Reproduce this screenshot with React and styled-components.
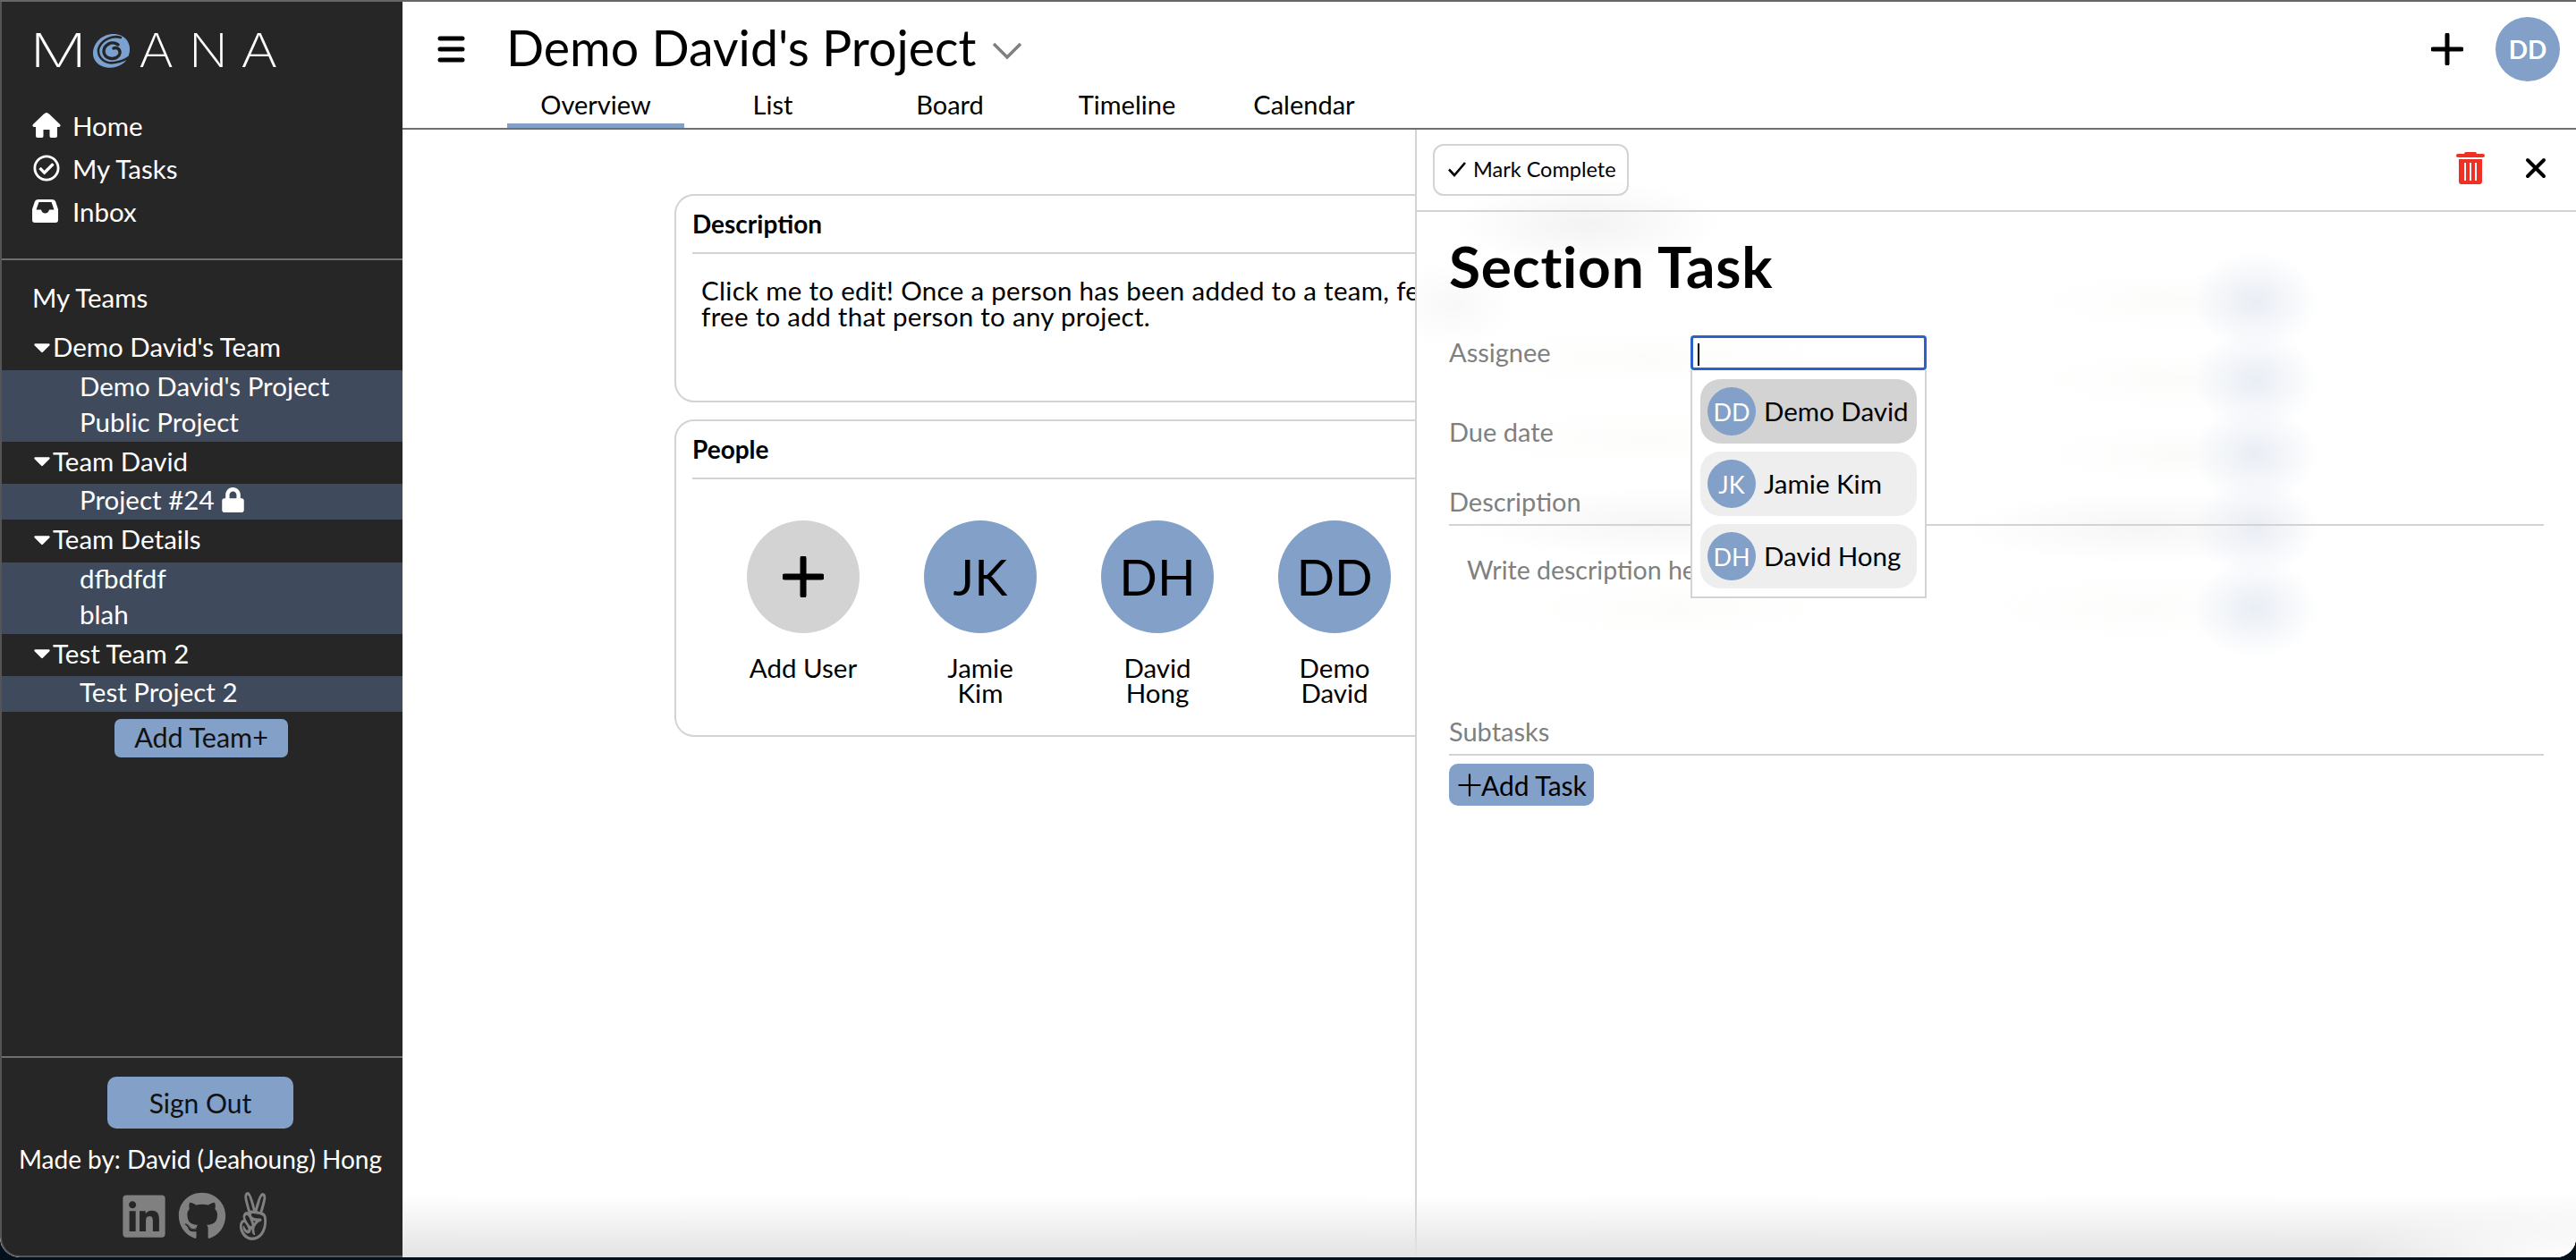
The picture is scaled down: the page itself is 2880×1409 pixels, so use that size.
import React from 'react';
import styled, { createGlobalStyle } from 'styled-components';
import { FaRegCheckCircle, FaCaretDown, FaLock, FaLinkedin, FaGithub, FaAngellist } from 'react-icons/fa';

const BLUE = '#82a0c8';
const LINE = '#d3d3d3';
const GREY = '#808080';

const GlobalStyle = createGlobalStyle`
  html, body {
    margin: 0;
    padding: 0;
    background: #05101a;
  }
  body {
    font-family: Lato, "Open Sans", sans-serif;
    font-size: 29px;
    color: #000;
  }
  * {
    box-sizing: border-box;
  }
`;

const Screen = styled.div`
  height: 1409px;
  overflow: hidden;
  background: #04101a;
`;

const AppWindow = styled.div`
  height: 1406px;
  display: grid;
  grid-template-columns: 450px 1fr;
  overflow: hidden;
  border-radius: 0 0 22px 22px;
  border-top: 2px solid #666;
  background: #fff;
`;

const Sidebar = styled.aside`
  display: flex;
  flex-direction: column;
  background: #262626;
  color: #fff;
  border-left: 2px solid #555;
  border-bottom: 2px solid #555;
  border-radius: 0 0 0 22px;
  font-size: 29.5px;
`;

const SidebarTop = styled.div`
  padding: 36px 0 29px 34px;
  border-bottom: 2px solid #6f6f6f;
`;

const Logo = styled.div`
  height: 38px;
  margin-bottom: 40px;
  display: flex;
  align-items: center;
  font-family: Inter, Lato, sans-serif;
  font-weight: 200;
  font-size: 52px;
  line-height: 38px;
`;

const LogoLetter = styled.span`
  display: block;
  width: ${(p) => p.$width}px;
  margin-left: ${(p) => p.$gap}px;
  transform: scaleX(${(p) => p.$stretch});
  transform-origin: left center;
`;

const LogoSwirl = styled.svg`
  width: 44px;
  height: 40px;
  flex: none;
  margin-left: 22px;
`;

const NavRow = styled.div`
  height: 48px;
  display: flex;
  align-items: center;
  svg {
    width: 32px;
    height: 30px;
    margin-right: 13px;
  }
`;

const TeamsTitle = styled.div`
  height: 40px;
  margin: 22px 0 13px 34px;
  line-height: 40px;
`;

const TeamRow = styled.div`
  height: 47.5px;
  padding: 0 0 4px 33px;
  display: flex;
  align-items: center;
  svg {
    width: 24px;
    height: 30px;
  }
`;

const ProjectList = styled.div`
  background: #3f4b5c;
`;

const ProjectRow = styled.div`
  height: 40px;
  padding: 0 0 5px 87px;
  display: flex;
  align-items: center;
  gap: 8px;
  svg {
    width: 25px;
    height: 28px;
  }
`;

const AddTeamButton = styled.button`
  display: block;
  width: 194px;
  height: 43px;
  margin: 8px 0 0 126px;
  padding: 0 0 4px;
  border: 0;
  border-radius: 7px;
  background: ${BLUE};
  color: #111;
  font: inherit;
  font-size: 30.5px;
`;

const SidebarFooter = styled.div`
  margin-top: auto;
  height: 223px;
  border-top: 2px solid #6f6f6f;
  display: flex;
  flex-direction: column;
  align-items: center;
  padding: 21px 4px 0 0;
`;

const SignOutButton = styled.button`
  width: 208px;
  height: 58px;
  border: 0;
  border-radius: 10px;
  background: ${BLUE};
  color: #111;
  font: inherit;
  font-size: 30px;
`;

const MadeBy = styled.div`
  margin-top: 16px;
  line-height: 36px;
  font-size: 28px;
  white-space: nowrap;
`;

const SocialRow = styled.div`
  margin: 19px 13px 0 0;
  display: flex;
  align-items: center;
  gap: 11px;
  color: ${GREY};
`;

const Main = styled.main`
  position: relative;
  display: flex;
  flex-direction: column;
  min-width: 0;
  &::after {
    content: '';
    position: absolute;
    left: 0;
    right: 0;
    bottom: 0;
    height: 70px;
    background:
      radial-gradient(ellipse 260px 66px at 100% 100%, #fff, rgba(255, 255, 255, 0)),
      linear-gradient(to bottom, rgba(227, 227, 227, 0), rgba(227, 227, 227, 1));
    pointer-events: none;
  }
`;

const Header = styled.header`
  height: 143px;
  flex: none;
  border-bottom: 2px solid #6f6f6f;
`;

const HeaderTop = styled.div`
  height: 94px;
  padding: 0 18px 0 39px;
  display: flex;
  align-items: center;
`;

const MenuIcon = styled.svg`
  width: 31px;
  height: 32px;
  flex: none;
  margin-right: 46px;
  margin-top: 12px;
`;

const ProjectTitle = styled.h1`
  margin: 7px 0 0;
  font-weight: 400;
  font-size: 55.5px;
  line-height: 70px;
`;

const TitleChevron = styled.svg`
  width: 34px;
  height: 20px;
  margin: 16px 0 0 18px;
`;

const HeaderActions = styled.div`
  margin-left: auto;
  display: flex;
  align-items: center;
  gap: 36px;
  margin-top: 12px;
`;

const BigPlus = styled.svg`
  width: ${(p) => p.$size}px;
  height: ${(p) => p.$size}px;
  display: block;
  flex: none;
`;

const UserBadge = styled.div`
  width: 72px;
  height: 72px;
  border-radius: 50%;
  background: ${BLUE};
  color: #fff;
  font-weight: 700;
  font-size: 28px;
  display: flex;
  align-items: center;
  justify-content: center;
`;

const Tabs = styled.nav`
  height: 47px;
  padding-left: 117px;
  display: flex;
`;

const Tab = styled.div`
  width: 198px;
  height: 47px;
  text-align: center;
  line-height: 42px;
  border-bottom: 5px solid ${(p) => (p.$active ? BLUE : 'transparent')};
`;

const Content = styled.div`
  position: relative;
  flex: 1;
  overflow: hidden;
  padding: 72px 0 0 304px;
`;

const Card = styled.section`
  width: 1000px;
  height: ${(p) => p.$height}px;
  margin-bottom: 19px;
  padding: 0 18px;
  border: 2px solid ${LINE};
  border-radius: 22px;
`;

const CardTitle = styled.h2`
  height: 65px;
  margin: 0;
  border-bottom: 2px solid ${LINE};
  font-weight: 700;
  font-size: 28px;
  line-height: 62px;
`;

const CardText = styled.p`
  width: 860px;
  margin: 26px 0 0 10px;
  font-size: 29.5px;
  letter-spacing: 0.3px;
  line-height: 29px;
`;

const PeopleRow = styled.div`
  padding: 46px 0 0 25px;
  display: flex;
`;

const Person = styled.div`
  width: 198px;
  display: flex;
  flex-direction: column;
  align-items: center;
  text-align: center;
  font-size: 29.5px;
  line-height: 28px;
`;

const PersonCircle = styled.div`
  width: 126px;
  height: 126px;
  margin-bottom: 25px;
  border-radius: 50%;
  background: ${(p) => (p.$add ? LINE : BLUE)};
  display: flex;
  align-items: center;
  justify-content: center;
  font-size: 56px;
`;

const blobs = [
  [937, 192, 70, 55, '#e9edf5'],
  [937, 280, 70, 55, '#e9edf5'],
  [937, 363, 70, 55, '#e9edf5'],
  [937, 445, 70, 55, '#eaedf5'],
  [937, 535, 70, 55, '#e9edf5'],
  [850, 192, 160, 34, '#fbfcfa'],
  [850, 280, 160, 34, '#fbfcfa'],
  [850, 363, 160, 34, '#fbfcfa'],
  [810, 445, 200, 40, '#f6f6f6'],
  [810, 535, 200, 40, '#fcfdfb'],
  [190, 105, 150, 50, '#f3f3f3'],
  [40, 195, 70, 50, '#f8f8f8'],
  [260, 255, 240, 34, '#fcfdfb'],
  [260, 345, 240, 34, '#fcfdfb'],
  [270, 440, 220, 40, '#f6f6f6'],
  [290, 535, 200, 34, '#fcfdfb'],
];

const blobBackground = blobs
  .map(([x, y, rx, ry, color]) => `radial-gradient(ellipse ${rx}px ${ry}px at ${x}px ${y}px, ${color}, rgba(255, 255, 255, 0))`)
  .join(', ');

const TaskPanel = styled.section`
  position: absolute;
  top: 0;
  right: 0;
  bottom: 0;
  left: 1132px;
  border-left: 2px solid ${LINE};
  background-color: #fff;
  background-image: ${blobBackground};
  font-size: 29px;
`;

const PanelBar = styled.div`
  height: 92px;
  padding: 16px 33px 0 18px;
  border-bottom: 2px solid ${LINE};
  display: flex;
  align-items: flex-start;
`;

const MarkCompleteButton = styled.button`
  width: 219px;
  height: 58px;
  padding: 0 0 2px 14px;
  border: 2px solid ${LINE};
  border-radius: 12px;
  background: transparent;
  font: inherit;
  font-size: 23.5px;
  display: flex;
  align-items: center;
  gap: 7px;
`;

const CheckIcon = styled.svg`
  width: 22px;
  height: 18px;
`;

const PanelActions = styled.div`
  margin-left: auto;
  display: flex;
  align-items: center;
  gap: 45px;
  padding-top: 9px;
`;

const TrashIcon = styled.svg`
  width: 32px;
  height: 36px;
`;

const CloseIcon = styled.svg`
  width: 24px;
  height: 24px;
`;

const PanelBody = styled.div`
  padding: 23px 36px 0;
`;

const TaskTitle = styled.h1`
  margin: 0 0 39px;
  font-weight: 700;
  font-size: 64px;
  letter-spacing: 0.8px;
  line-height: 76px;
`;

const FieldRow = styled.div`
  height: 39px;
  margin-bottom: ${(p) => p.$below}px;
  display: flex;
  align-items: center;
  color: ${GREY};
`;

const FieldLabel = styled.div`
  width: 270px;
  padding-bottom: 2px;
`;

const AssigneeBox = styled.div`
  position: relative;
  width: 264px;
  height: 39px;
`;

const AssigneeInput = styled.div`
  height: 39px;
  padding: 6px 0 0 5px;
  border: 3px solid #2c62c8;
  border-radius: 4px;
`;

const Caret = styled.div`
  width: 2px;
  height: 25px;
  background: #000;
`;

const AssigneeMenu = styled.div`
  position: absolute;
  top: 39px;
  left: 0;
  width: 264px;
  padding: 10px 9px 9px;
  border: 2px solid ${LINE};
  border-top: 0;
  background: #fff;
  display: flex;
  flex-direction: column;
  gap: 9px;
`;

const AssigneeOption = styled.div`
  height: 72px;
  padding-left: 8px;
  border-radius: 22px;
  background: ${(p) => (p.$active ? LINE : '#eeeeee')};
  color: #000;
  font-size: 29.5px;
  display: flex;
  align-items: center;
  gap: 9px;
  white-space: nowrap;
`;

const OptionName = styled.span`
  padding-bottom: 2px;
`;

const OptionCircle = styled.div`
  width: 54px;
  height: 54px;
  flex: none;
  border-radius: 50%;
  background: ${BLUE};
  color: #fff;
  display: flex;
  align-items: center;
  justify-content: center;
  font-size: 27px;
`;

const SectionLabel = styled.div`
  margin-top: ${(p) => p.$top}px;
  height: 48px;
  padding-bottom: 6px;
  border-bottom: 2px solid ${LINE};
  line-height: 41px;
  color: ${GREY};
`;

const DescriptionPlaceholder = styled.div`
  margin: 34px 0 0 20px;
  font-size: 28.5px;
  line-height: 30px;
  color: ${GREY};
`;

const AddTaskButton = styled.button`
  display: flex;
  align-items: center;
  width: 162px;
  height: 47px;
  margin-top: 9px;
  padding: 0 0 0 10px;
  border: 0;
  border-radius: 10px;
  background: ${BLUE};
  font: inherit;
  font-size: 30px;
`;

const teams = [
  { name: "Demo David's Team", projects: [{ name: "Demo David's Project" }, { name: 'Public Project' }] },
  { name: 'Team David', projects: [{ name: 'Project #24', locked: true }] },
  { name: 'Team Details', projects: [{ name: 'dfbdfdf' }, { name: 'blah' }] },
  { name: 'Test Team 2', projects: [{ name: 'Test Project 2' }] },
];

const tabs = ['Overview', 'List', 'Board', 'Timeline', 'Calendar'];

const people = [
  { initials: 'JK', name: 'Jamie Kim' },
  { initials: 'DH', name: 'David Hong' },
  { initials: 'DD', name: 'Demo David' },
];

const assignees = [
  { initials: 'DD', name: 'Demo David', active: true },
  { initials: 'JK', name: 'Jamie Kim' },
  { initials: 'DH', name: 'David Hong' },
];

const Plus = ({ size, weight }) => (
  <BigPlus $size={size} viewBox="0 0 36 36">
    <path d="M18 2v32M2 18h32" stroke="#000" strokeWidth={weight} strokeLinecap="round" fill="none" />
  </BigPlus>
);

const App = () => (
  <Screen>
    <GlobalStyle />
    <AppWindow>
      <Sidebar>
        <SidebarTop>
          <Logo>
            <LogoLetter $width={48} $gap={-3} $stretch={1.38}>M</LogoLetter>
            <LogoSwirl viewBox="0 0 44 40">
              <path d="M24 1C36 1 43 10 42 20C41 28 37 33 33 35C27 39 18 40 11 37C4 34 1 28 1 23C1 11 11 1 24 1Z" fill="#7ba1d0" />
              <path d="M32 5C22 2 10 8 7 18C6 27 14 35 25 33C31 32 36 31 41 27" stroke="#262626" strokeWidth="2.6" strokeLinecap="round" fill="none" />
              <path d="M29 13C22 8 13 13 13 21C14 29 25 31 30 25C33 20 29 15 24 17" stroke="#262626" strokeWidth="3.4" strokeLinecap="round" fill="none" />
            </LogoSwirl>
            <LogoLetter $width={41} $gap={8} $stretch={1.15}>A</LogoLetter>
            <LogoLetter $width={38} $gap={15} $stretch={1.1}>N</LogoLetter>
            <LogoLetter $width={41} $gap={20} $stretch={1.22}>A</LogoLetter>
          </Logo>
          <NavRow>
            <svg viewBox="0 0 32 30">
              <path fillRule="evenodd" d="M16 1Q17.5 1 19 2.5L31 14Q32.5 16.5 30 17H28V27Q28 29 26 29H21Q19.5 29 19.5 27V20H12.5V27Q12.5 29 11 29H6Q4 29 4 27V17H2Q-.5 16.5 1 14L13 2.5Q14.5 1 16 1Z" fill="#fff" />
            </svg>
            Home
          </NavRow>
          <NavRow><FaRegCheckCircle />My Tasks</NavRow>
          <NavRow>
            <svg viewBox="0 0 32 30">
              <path fillRule="evenodd" d="M7 2H22Q25 2 26 4L29 13V25Q29 28 26 28H3Q0 28 0 25V13L3 4Q4 2 7 2ZM7.5 5 4.5 13.5H10Q11 17.5 14.5 17.5T19 13.5H24.5L21.5 5Z" fill="#fff" />
            </svg>
            Inbox
          </NavRow>
        </SidebarTop>
        <TeamsTitle>My Teams</TeamsTitle>
        {teams.map((team) => (
          <div key={team.name}>
            <TeamRow><FaCaretDown />{team.name}</TeamRow>
            <ProjectList>
              {team.projects.map((project) => (
                <ProjectRow key={project.name}>
                  {project.name}
                  {project.locked && <FaLock />}
                </ProjectRow>
              ))}
            </ProjectList>
          </div>
        ))}
        <AddTeamButton>Add Team+</AddTeamButton>
        <SidebarFooter>
          <SignOutButton>Sign Out</SignOutButton>
          <MadeBy>Made by: David (Jeahoung) Hong</MadeBy>
          <SocialRow>
            <FaLinkedin size={54} />
            <FaGithub size={54} />
            <FaAngellist size={54} style={{ width: 38 }} preserveAspectRatio="none" />
          </SocialRow>
        </SidebarFooter>
      </Sidebar>
      <Main>
        <Header>
          <HeaderTop>
            <MenuIcon viewBox="0 0 31 32">
              <path d="M3 4h25M3 16h25M3 28h25" stroke="#000" strokeWidth="5" strokeLinecap="round" />
            </MenuIcon>
            <ProjectTitle>Demo David's Project</ProjectTitle>
            <TitleChevron viewBox="0 0 34 20">
              <path d="M2 2l15 15L32 2" stroke={GREY} strokeWidth="3.5" fill="none" />
            </TitleChevron>
            <HeaderActions>
              <Plus size={36} weight={5} />
              <UserBadge>DD</UserBadge>
            </HeaderActions>
          </HeaderTop>
          <Tabs>
            {tabs.map((tab) => (
              <Tab key={tab} $active={tab === 'Overview'}>{tab}</Tab>
            ))}
          </Tabs>
        </Header>
        <Content>
          <Card $height={233}>
            <CardTitle>Description</CardTitle>
            <CardText>Click me to edit! Once a person has been added to a team, feel free to add that person to any project.</CardText>
          </Card>
          <Card $height={355}>
            <CardTitle>People</CardTitle>
            <PeopleRow>
              <Person>
                <PersonCircle $add><Plus size={46} weight={5.5} /></PersonCircle>
                Add User
              </Person>
              {people.map((person) => (
                <Person key={person.initials}>
                  <PersonCircle>{person.initials}</PersonCircle>
                  {person.name.split(' ').map((part) => <div key={part}>{part}</div>)}
                </Person>
              ))}
            </PeopleRow>
          </Card>
          <TaskPanel>
            <PanelBar>
              <MarkCompleteButton>
                <CheckIcon viewBox="0 0 22 18">
                  <path d="M2 9.5 8 16 20 2" stroke="#000" strokeWidth="2.6" fill="none" />
                </CheckIcon>
                Mark Complete
              </MarkCompleteButton>
              <PanelActions>
                <TrashIcon viewBox="0 0 32 36">
                  <path fillRule="evenodd" d="M11 0H21Q23 0 23 2H30Q32 2 32 4T30 6H2Q0 6 0 4T2 2H9Q9 0 11 0ZM3 8H29V33Q29 36 26 36H6Q3 36 3 33ZM9 12V32H11V12ZM15 12V32H17V12ZM21 12V32H23V12Z" fill="#ee3124" />
                </TrashIcon>
                <CloseIcon viewBox="0 0 24 24">
                  <path d="M3 3l18 18M21 3L3 21" stroke="#000" strokeWidth="4" strokeLinecap="round" />
                </CloseIcon>
              </PanelActions>
            </PanelBar>
            <PanelBody>
              <TaskTitle>Section Task</TaskTitle>
              <FieldRow $below={50}>
                <FieldLabel>Assignee</FieldLabel>
                <AssigneeBox>
                  <AssigneeInput><Caret /></AssigneeInput>
                  <AssigneeMenu>
                    {assignees.map((person) => (
                      <AssigneeOption key={person.initials} $active={person.active}>
                        <OptionCircle>{person.initials}</OptionCircle>
                        <OptionName>{person.name}</OptionName>
                      </AssigneeOption>
                    ))}
                  </AssigneeMenu>
                </AssigneeBox>
              </FieldRow>
              <FieldRow $below={0}>
                <FieldLabel>Due date</FieldLabel>
              </FieldRow>
              <SectionLabel $top={37}>Description</SectionLabel>
              <DescriptionPlaceholder>Write description here...</DescriptionPlaceholder>
              <SectionLabel $top={145}>Subtasks</SectionLabel>
              <AddTaskButton>
                <Plus size={26} weight={3} />
                Add Task
              </AddTaskButton>
            </PanelBody>
          </TaskPanel>
        </Content>
      </Main>
    </AppWindow>
  </Screen>
);

export default App;
